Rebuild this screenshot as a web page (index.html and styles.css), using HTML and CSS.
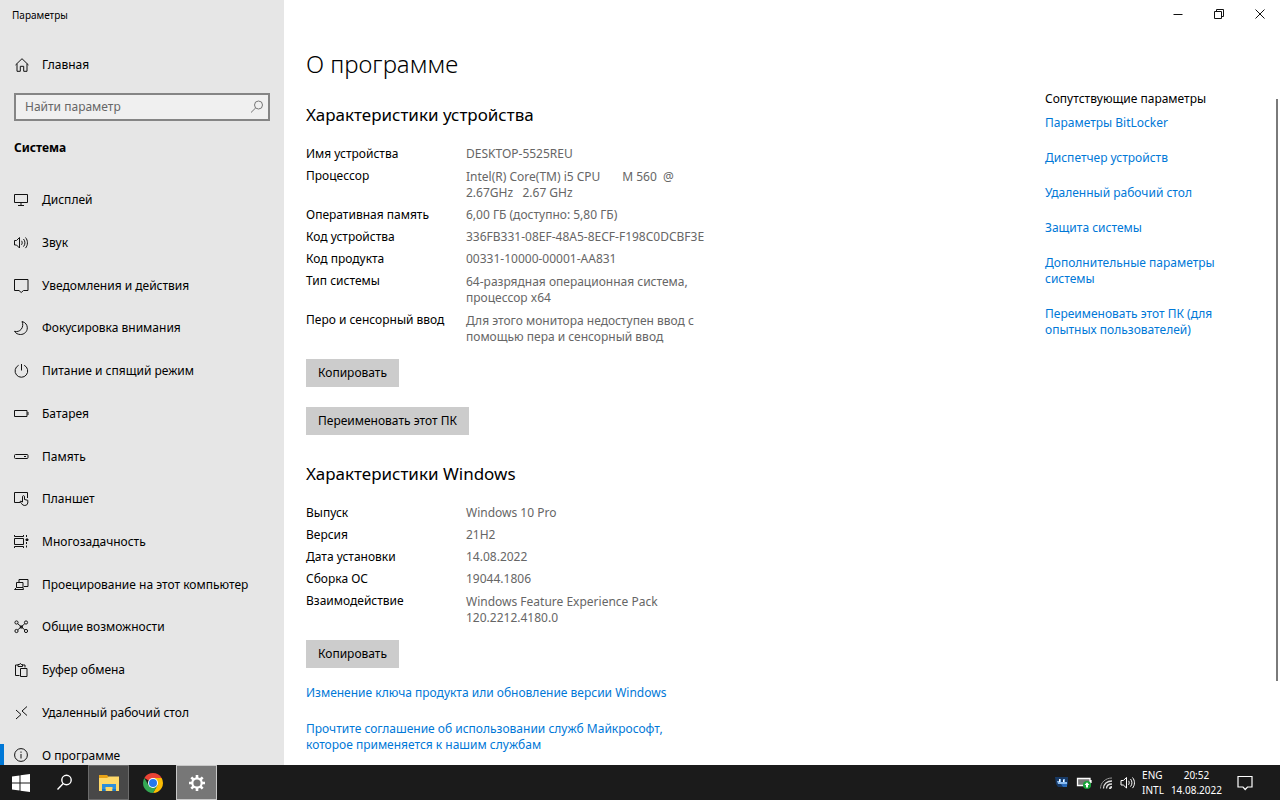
FILE: index.html
```html
<!DOCTYPE html>
<html lang="ru">
<head>
<meta charset="utf-8">
<title>Параметры</title>
<link rel="stylesheet" href="styles.css">
</head>
<body>
<div class="window">
  <aside class="sidebar">
    <div class="app-title">Параметры</div>
    <a class="nav-link home" href="#">
      <svg class="icon" viewBox="0 0 16 16"><path d="M1.500 8 8 1.700 14.500 8M3 6.800V14.300H6.300V9.300H9.700V14.300H13V6.800"/></svg>
      <span>Главная</span>
    </a>
    <div class="search">
      <input class="search-input" type="text" aria-label="Найти параметр" placeholder="Найти параметр">
      <svg class="icon search-icon" viewBox="0 0 16 16"><circle cx="9.500" cy="6" r="4"/><path d="M6.700 8.900 2 13.500"/></svg>
    </div>
    <h2 class="section">Система</h2>
    <nav class="nav">
      <a class="nav-link" href="#"><svg class="icon" viewBox="0 0 16 16"><path d="M1.500 2.500h13v8h-13zM8 10.500v2.500M5 13.500h6"/></svg><span>Дисплей</span></a>
      <a class="nav-link" href="#"><svg class="icon" viewBox="0 0 16 16"><path d="M1.500 5.500h2L6.500 2.500v10.500L3.500 10h-2zM8.500 5.800c.9 1.200.9 2.800 0 4M10.500 4c1.900 2.300 1.900 5.300 0 7.600M12.500 2.500c2.600 3 2.600 7.600 0 10.600"/></svg><span>Звук</span></a>
      <a class="nav-link" href="#"><svg class="icon" viewBox="0 0 16 16"><path d="M1.500 1.500h13.500v11h-4.500L8.200 14.500 6 12.500H1.500z"/></svg><span>Уведомления и действия</span></a>
      <a class="nav-link" href="#"><svg class="icon" viewBox="0 0 16 16"><path d="M9 1.500C12.500 2.300 14.300 5 14.300 7.800C14.300 11.800 11.200 14.500 7.500 14.500C5 14.500 2.800 13.400 1.500 11.300C4 12 6.500 11.300 8.200 9.300C10 7 10.200 4 9 1.500z"/></svg><span>Фокусировка внимания</span></a>
      <a class="nav-link" href="#"><svg class="icon" viewBox="0 0 16 16"><path d="M8.500 1v6.500M5.600 2.300a6.300 6.300 0 1 0 5.600 0"/></svg><span>Питание и спящий режим</span></a>
      <a class="nav-link" href="#"><svg class="icon" viewBox="0 0 16 16"><path d="M1.500 4.500h12.500v6H1.500zM15 6v3"/></svg><span>Батарея</span></a>
      <a class="nav-link" href="#"><svg class="icon" viewBox="0 0 16 16"><rect x="1.500" y="5.500" width="13.500" height="4" rx="1"/><path d="M11 7.500h2"/></svg><span>Память</span></a>
      <a class="nav-link" href="#"><svg class="icon" viewBox="0 0 16 16"><path d="M7 11.500H1.500v-10H14.500V7M9.500 11V5.300q1-1.300 2 0v3.200l3.300.8v2.700q-.5 2.500-3 2.500-2.300 0-3.300-2L7 10.500q.7-1 2.500.5"/></svg><span>Планшет</span></a>
      <a class="nav-link" href="#"><svg class="icon" viewBox="0 0 16 16"><path d="M1.500 1v1.500h9V1M1.500 14v-1.500h9V14M1.500 4.500h9v6h-9zM13.500 1v2M13.500 8v2M13.500 11.500v2"/><path fill="#111" d="M13 5h2v1.500h-2z"/></svg><span>Многозадачность</span></a>
      <a class="nav-link" href="#"><svg class="icon" viewBox="0 0 16 16"><path d="M6 5V2.500h9v7h-4M3.500 5.500h6.500v5H3.500zM3.500 10.500 1.500 12.500h9l-.5-2"/></svg><span>Проецирование на этот компьютер</span></a>
      <a class="nav-link" href="#"><svg class="icon" viewBox="0 0 16 16"><circle cx="3.500" cy="3.500" r="1.600"/><circle cx="13" cy="3.500" r="1.600"/><circle cx="3.500" cy="12" r="1.600"/><circle cx="13" cy="12" r="1.600"/><path d="M4.700 4.700 11.800 10.900M11.800 4.700 4.700 10.900M7.300 7h2v2h-2z"/></svg><span>Общие возможности</span></a>
      <a class="nav-link" href="#"><svg class="icon" viewBox="0 0 16 16"><path d="M6.500 13.500h-4V3H5M9.500 3H12v2.500M5 4.500V2.500h1.500Q7.300.200 8.200 2.500H9.500v2zM7.500 6.500h6.500v8H7.500z"/></svg><span>Буфер обмена</span></a>
      <a class="nav-link" href="#"><svg class="icon" viewBox="0 0 16 16"><path d="M3 5 8 9.500 3 14M14 1.500 9 6 14 10.500"/></svg><span>Удаленный рабочий стол</span></a>
      <a class="nav-link current" href="#" aria-current="page"><svg class="icon" viewBox="0 0 16 16"><circle cx="8" cy="7" r="6.400"/><path d="M8 6v4.500M8 3.500v1.300"/></svg><span>О программе</span></a>
    </nav>
  </aside>

  <main class="main">
    <div class="caption">
      <button class="caption-button" aria-label="Свернуть"><svg class="caption-icon" viewBox="0 0 10 10"><path d="M.5 5.500h9"/></svg></button>
      <button class="caption-button" aria-label="Свернуть в окно"><svg class="caption-icon" viewBox="0 0 10 10"><path d="M.5 2.500h7v7h-7zM2.500 2.500v-2h7v7h-2"/></svg></button>
      <button class="caption-button" aria-label="Закрыть"><svg class="caption-icon" viewBox="0 0 10 10"><path d="M.5.500l9 9M9.500.500l-9 9"/></svg></button>
    </div>
    <div class="content">
      <div class="about">
        <h1 class="page-title">О программе</h1>
        <h2 class="heading">Характеристики устройства</h2>
        <dl class="specs">
          <dt>Имя устройства</dt><dd>DESKTOP-5525REU</dd>
          <dt>Процессор</dt><dd class="multiline pre">Intel(R) Core(TM) i5 CPU       M 560  @
2.67GHz   2.67 GHz</dd>
          <dt>Оперативная память</dt><dd>6,00 ГБ (доступно: 5,80 ГБ)</dd>
          <dt>Код устройства</dt><dd>336FB331-08EF-48A5-8ECF-F198C0DCBF3E</dd>
          <dt>Код продукта</dt><dd>00331-10000-00001-AA831</dd>
          <dt>Тип системы</dt><dd class="multiline">64-разрядная операционная система,<br>процессор x64</dd>
          <dt>Перо и сенсорный ввод</dt><dd class="multiline">Для этого монитора недоступен ввод с<br>помощью пера и сенсорный ввод</dd>
        </dl>
        <div class="actions">
          <button class="button">Копировать</button>
          <button class="button">Переименовать этот ПК</button>
        </div>
        <h2 class="heading">Характеристики Windows</h2>
        <dl class="specs">
          <dt>Выпуск</dt><dd>Windows 10 Pro</dd>
          <dt>Версия</dt><dd>21H2</dd>
          <dt>Дата установки</dt><dd>14.08.2022</dd>
          <dt>Сборка ОС</dt><dd>19044.1806</dd>
          <dt>Взаимодействие</dt><dd class="multiline">Windows Feature Experience Pack<br>120.2212.4180.0</dd>
        </dl>
        <div class="actions">
          <button class="button">Копировать</button>
        </div>
        <div class="links">
          <a class="link" href="#">Изменение ключа продукта или обновление версии Windows</a>
          <a class="link" href="#">Прочтите соглашение об использовании служб Майкрософт,<br>которое применяется к нашим службам</a>
        </div>
      </div>
      <aside class="related">
        <h3 class="related-title">Сопутствующие параметры</h3>
        <a class="link" href="#">Параметры BitLocker</a>
        <a class="link" href="#">Диспетчер устройств</a>
        <a class="link" href="#">Удаленный рабочий стол</a>
        <a class="link" href="#">Защита системы</a>
        <a class="link" href="#">Дополнительные параметры<br>системы</a>
        <a class="link" href="#">Переименовать этот ПК (для<br>опытных пользователей)</a>
      </aside>
    </div>
    <div class="scroll-thumb"></div>
  </main>
</div>

<footer class="taskbar">
  <div class="tasks">
    <button class="task" aria-label="Пуск"><svg class="task-icon" viewBox="0 0 20 20"><path fill="#fff" d="M1 3.500 8.500 2.400V9.500H1zM9.500 2.200 19 1v8.500H9.500zM1 10.500h7.500v7L1 16.500zM9.500 10.500H19V19l-9.500-1.300z"/></svg></button>
    <button class="task" aria-label="Поиск"><svg class="task-icon" viewBox="0 0 20 20"><g fill="none" stroke="#fff" stroke-width="1.400"><circle cx="11.500" cy="7" r="4.700"/><path d="M8.200 10.500 2.500 16.500"/></g></svg></button>
    <button class="task open" aria-label="Проводник"><svg class="task-icon" viewBox="0 0 20 20"><path fill="#e8a317" d="M0 2h8l2 2h-1v4H0z"/><path fill="#ffd969" d="M0 5h8l2-1.500h10V18H0z"/><path fill="#2f8fdb" d="M3 11h14v7h-3.500v-4h-7v4H3z"/><path fill="#1a78c8" d="M3 16h3.500v2H3zM13.500 16H17v2h-3.500z"/></svg></button>
    <button class="task" aria-label="Chrome"><svg class="task-icon" viewBox="0 0 20 20"><path fill="#ea4335" d="M10 10 1.340 5A10 10 0 0 1 18.660 5H10z"/><path fill="#fbbc04" d="M10 5h8.660A10 10 0 0 1 10 20l4.330-7.500z"/><path fill="#34a853" d="M1.340 5A10 10 0 0 0 10 20l4.330-7.500L10 10 5.670 12.500z"/><circle cx="10" cy="10" r="5" fill="#fff"/><circle cx="10" cy="10" r="4" fill="#2478ee"/></svg></button>
    <button class="task active" aria-label="Параметры"><svg class="task-icon" viewBox="0 0 20 20"><g fill="none" stroke="#fff"><circle cx="10" cy="10" r="4.700" stroke-width="2.200"/><path stroke-width="2.600" d="M10 5V2M10 15v3M5 10H2M15 10h3M6.500 6.500 4.300 4.300M13.500 13.500l2.200 2.200M6.500 13.500l-2.200 2.200M13.500 6.500l2.200-2.200"/></g></svg></button>
  </div>
  <div class="tray">
    <svg class="tray-icon" viewBox="0 0 16 16"><path fill="#183a66" d="M1 2h13v7l-2 3H4L2 9z"/><path fill="#8bbcf0" d="M3 6h2V4h2v3h2V4h2v3h2v2H4z"/><path fill="#fff" d="M5 4h1v3H5zM9 5h1v2H9z"/><path fill="#2769b8" d="M7 9h6v3H9z"/></svg>
    <svg class="tray-icon" viewBox="0 0 16 16"><path fill="#777" stroke="#fff" stroke-width="1.300" d="M1.500 3.500H14v7H1.500zM15 5v3"/><circle cx="11" cy="10" r="4" fill="#16a338"/><path fill="#fff" d="M11 7.300 13.500 10H12v2.500h-2V10H8.500z"/></svg>
    <svg class="tray-icon" viewBox="0 0 16 16"><g fill="none" stroke="#ddd"><path d="M2.500 13.500C2.500 7.500 7.500 3 14 3" stroke="#999"/><path d="M5.500 13.500C5.500 9 9 6 14 6M8.500 13.500C8.500 10.500 10.700 9 14 9" stroke-width="1.300"/><path d="M12 14a2 2 0 0 1 2-2" stroke-width="2"/></g></svg>
    <svg class="tray-icon" viewBox="0 0 16 16"><path fill="none" stroke="#fff" d="M1 5.500h2.300L6.500 2.500v10.500L3.300 10H1zM8.500 5.800c.9 1.200.9 2.800 0 4M10.500 4c1.900 2.300 1.900 5.300 0 7.600M12.500 2.500c2.600 3 2.600 7.600 0 10.600"/></svg>
    <div class="tray-text">ENG<br>INTL</div>
    <div class="tray-text clock">20:52<br>14.08.2022</div>
    <button class="notify" aria-label="Уведомления"><svg class="tray-icon" viewBox="0 0 16 16"><path fill="none" stroke="#fff" stroke-width="1.200" d="M1 1.500h14v10.500h-4.500L8.200 14.500 6 12H1z"/></svg></button>
  </div>
</footer>
</body>
</html>
```
FILE: styles.css
```css
* {
  box-sizing: border-box;
}

body {
  margin: 0;
  height: 100vh;
  display: flex;
  flex-direction: column;
  overflow: hidden;
  font: 12px/16px "Noto Sans", "Open Sans", sans-serif;
  color: #000;
  background: #fff;
}

h1, h2, h3, dl, dd {
  margin: 0;
  font-weight: 400;
}

a {
  text-decoration: none;
}

button {
  border: 0;
  padding: 0;
  background: none;
  font: inherit;
  color: inherit;
}

.window {
  flex: 1;
  min-height: 0;
  display: flex;
}

.sidebar {
  width: 284px;
  flex: none;
  display: flex;
  flex-direction: column;
  overflow: hidden;
  background: #e6e6e6;
}

.app-title {
  padding: 7px 12px 0;
  font-size: 10px;
}

.nav-link {
  display: flex;
  align-items: center;
  gap: 13px;
  padding-left: 13px;
  color: #000;
}

.home {
  height: 42px;
  margin-top: 21px;
  padding-left: 14px;
  gap: 12px;
}

.icon {
  width: 16px;
  height: 16px;
  flex: none;
  fill: none;
  stroke: #111;
}

.search {
  display: flex;
  align-items: center;
  height: 28px;
  margin: 7px 14px 0;
  padding: 0 3px 0 9px;
  border: 2px solid #858585;
  background: #f0f0f0;
}

.search-input {
  flex: 1;
  min-width: 0;
  padding: 0;
  border: 0;
  outline: 0;
  background: none;
  font: inherit;
}

.search-input::placeholder {
  color: #666;
  opacity: 1;
}

.search-icon {
  stroke: #777;
}

.section {
  margin: 19px 14px 23px;
  font-size: 12px;
  font-weight: 700;
}

.nav {
  flex: 1;
  min-height: 0;
  display: grid;
  grid-auto-rows: 1fr;
  margin-bottom: -12px;
}

.current {
  padding-left: 0;
}

.current::before {
  content: "";
  width: 4px;
  height: 24px;
  margin-right: -4px;
  background: #0078d7;
}

.main {
  flex: 1;
  position: relative;
  display: flex;
  flex-direction: column;
  overflow: hidden;
}

.caption {
  display: flex;
  justify-content: flex-end;
}

.caption-button {
  width: 41px;
  height: 29px;
}

.caption-icon {
  width: 10px;
  height: 10px;
  fill: none;
  stroke: #111;
}

.content {
  display: flex;
  justify-content: space-between;
  padding: 17px 48px 0 22px;
}

.page-title {
  font-size: 24px;
  line-height: 36px;
  font-weight: 300;
}

.heading {
  margin: 21px 0 19px;
  font-size: 17px;
  line-height: 24px;
}

.actions + .heading {
  margin-top: 27px;
}

.specs {
  display: grid;
  grid-template-columns: 160px auto;
  justify-content: start;
  row-gap: 6px;
}

.specs dd {
  color: #666;
}

.specs .multiline {
  padding-top: 1px;
}

.pre {
  white-space: pre;
}

.actions {
  display: flex;
  flex-direction: column;
  align-items: flex-start;
  gap: 20px;
  margin-top: 14px;
}

.button {
  height: 28px;
  padding: 0 12px;
  background: #ccc;
}

.links {
  display: grid;
  gap: 20px;
  margin-top: 17px;
}

.link {
  color: #0078d7;
}

.related {
  width: 187px;
  display: flex;
  flex-direction: column;
  align-items: flex-start;
  gap: 19px;
  padding-top: 45px;
}

.related-title {
  margin-bottom: -11px;
  font-size: 12px;
}

.scroll-thumb {
  position: absolute;
  top: 13%;
  right: 2px;
  bottom: 11%;
  width: 2px;
  background: #7a7a7a;
}

.taskbar {
  flex: none;
  height: 35px;
  display: flex;
  justify-content: space-between;
  color: #fff;
  background: #1b1b1b;
}

.tasks {
  display: flex;
  gap: 3px;
}

.task {
  width: 41px;
  display: grid;
  place-items: center;
}

.task-icon {
  width: 20px;
  height: 20px;
}

.open {
  background: #484848;
  border: 1px solid #6b6b6b;
}

.active {
  background: #777;
  border: 1px solid #c8c8c8;
}

.tray {
  display: flex;
  align-items: center;
  gap: 6px;
  padding-right: 27px;
}

.tray-icon {
  width: 16px;
  height: 16px;
}

.tray-text {
  font-size: 10px;
  line-height: 15px;
}

.clock {
  margin: 0 9px 0 1px;
  text-align: center;
}

.notify {
  display: grid;
}
```
